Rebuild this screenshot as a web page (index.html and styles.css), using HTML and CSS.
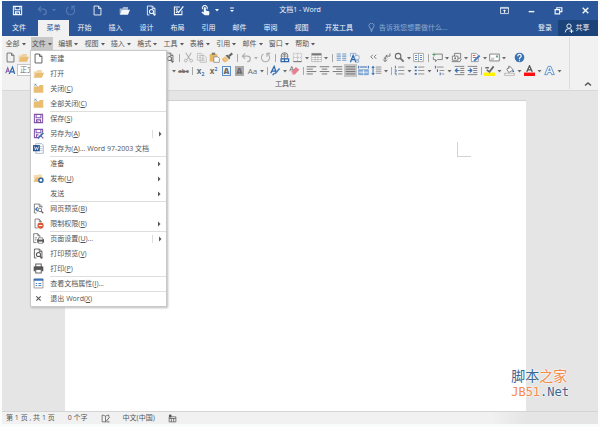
FILE: index.html
```html
<!DOCTYPE html>
<html lang="zh-CN">
<head>
<meta charset="utf-8">
<title>文档1 - Word</title>
<link rel="stylesheet" href="styles.css">
</head>
<body>
<svg class="sprite" aria-hidden="true">
  <symbol id="save" viewBox="0 0 16 16"><path d="M2 2h12v12H2z M4.500 2v5h7V2 M5 14v-4h6v4 M7 11.500v2" fill="none" stroke="currentColor" stroke-width="1.500"/></symbol>
  <symbol id="undo" viewBox="0 0 16 16"><path d="M6 2L2 6l4 4M2 6h7c6 0 6 8 0 8" fill="none" stroke="currentColor" stroke-width="1.800"/></symbol>
  <symbol id="redo" viewBox="0 0 16 16"><path d="M5 3a6 6 0 1 0 6 0M10 7V2h5" fill="none" stroke="currentColor" stroke-width="1.600"/></symbol>
  <symbol id="new" viewBox="0 0 16 16"><path d="M3 1.500h6.500L13 5v9.500H3z" class="paper" stroke="currentColor" stroke-width="1.300"/><path d="M9.500 1.500V5H13" fill="none" stroke="currentColor" stroke-width="1.300"/></symbol>
  <symbol id="open" viewBox="0 0 16 16"><path d="M1 13V5h4l1-2h7v4H4z" fill="currentColor" opacity=".6"/><path d="M4 7h12l-3 7H1z" fill="currentColor"/></symbol>
  <symbol id="shut" viewBox="0 0 16 16"><path d="M1 5h7l2-2h5v11H1z" fill="#e9bd72"/><path d="M2 1l4 4M5 1L2 4" stroke="#5d83b4" stroke-width="1.200"/></symbol>
  <symbol id="preview" viewBox="0 0 16 16"><path d="M5 14.500H2v-13h7.500L13 5v9.500h-2M9 1.500V5h4" fill="none" stroke="currentColor" stroke-width="1.300"/><circle cx="8" cy="9.500" r="3" fill="none" stroke="currentColor" stroke-width="1.500"/><path d="M10 12l3.500 3" stroke="currentColor" stroke-width="2"/></symbol>
  <symbol id="web" viewBox="0 0 16 16"><path d="M5 14.500H2v-13h7.500L13 5v2M9 1.500V5h4" fill="none" stroke="#777" stroke-width="1.300"/><path d="M7 6L4 9l3 3" fill="none" stroke="#3c78c0" stroke-width="2"/><circle cx="10" cy="10" r="2.600" fill="#fff" stroke="#666" stroke-width="1.300"/><path d="M12 12l3 3" stroke="#666" stroke-width="1.800"/></symbol>
  <symbol id="check" viewBox="0 0 16 16"><path d="M13 8v6H2V3h8M4 6h3M4 11h2" fill="none" stroke="currentColor" stroke-width="1.500"/><path d="M5 8l3 3 7-9" fill="none" stroke="currentColor" stroke-width="2"/></symbol>
  <symbol id="touch" viewBox="0 0 16 16"><path d="M4 6a3.500 3.500 0 1 1 6 0" fill="none" stroke="currentColor" stroke-width="1.500"/><path d="M5.500 4q1.500-2 3 0v4l4.500 1q1.500 1 0 6H7L2 11l1.500-1.500 2 1.500z" fill="currentColor"/></symbol>
  <symbol id="caret" viewBox="0 0 6 6"><path d="M1 2h4L3 4.500z" fill="currentColor"/></symbol>
  <symbol id="more" viewBox="0 0 8 8"><path d="M2 2h4" stroke="currentColor"/><path d="M2 4h4L4 6z" fill="currentColor"/></symbol>
  <symbol id="ropt" viewBox="0 0 16 16"><path d="M1 2.500h14v11H1zM1 4h14" fill="none" stroke="currentColor" stroke-width="1.400"/><path d="M8 6l3 3H9v3H7V9H5z" fill="currentColor"/></symbol>
  <symbol id="min" viewBox="0 0 16 16"><path d="M3 10h10" stroke="currentColor" stroke-width="2.500"/></symbol>
  <symbol id="restore" viewBox="0 0 16 16"><path d="M2 6.500h8V14H2zM5 6V3h9v7h-3" fill="none" stroke="currentColor" stroke-width="2"/></symbol>
  <symbol id="close" viewBox="0 0 16 16"><path d="M3 3l10 10M13 3L3 13" stroke="currentColor" stroke-width="2.500"/></symbol>
  <symbol id="bulb" viewBox="0 0 16 16"><path d="M6 11q0-2-1.500-3.500a4.500 4.500 0 1 1 7 0Q10 9 10 11zM6 13h4M7 15h2" fill="none" stroke="currentColor" stroke-width="1.200"/></symbol>
  <symbol id="person" viewBox="0 0 16 16"><circle cx="8" cy="5" r="3.500" fill="none" stroke="currentColor" stroke-width="1.500"/><path d="M2 15q0-6 6-6 2 0 3 1M9 13h6M12 10v6" fill="none" stroke="currentColor" stroke-width="1.500"/></symbol>
  <symbol id="cut" viewBox="0 0 16 16"><path d="M4 1l6 10M12 1L6 11" stroke="currentColor" stroke-width="1.500"/><circle cx="4" cy="12.500" r="2" fill="none" stroke="currentColor" stroke-width="1.300"/><circle cx="12" cy="12.500" r="2" fill="none" stroke="currentColor" stroke-width="1.300"/></symbol>
  <symbol id="copy" viewBox="0 0 16 16"><path d="M2 2h6l2 2v8H2zM6 5h6l3 3v7H6zM8 9h4M8 12h5M4 5h3M4 8h3" fill="none" stroke="currentColor"/></symbol>
  <symbol id="paste" viewBox="0 0 16 16"><path d="M1 3h11v11H1z" fill="#e8b765"/><path d="M4 1h5v3H4z" fill="#777"/><path d="M7 7h6l2 2v6H7z" fill="#fff" stroke="#777"/></symbol>
  <symbol id="brush" viewBox="0 0 16 16"><path d="M1 8l6 6-4 1-3-4z" fill="#e8b765"/><path d="M2 8l5 6 3-3-5-5z" fill="#edc27b"/><path d="M5 5l6 6 1-3-4-4z" fill="#666"/><path d="M10 6l5-4" stroke="#666" stroke-width="3"/></symbol>
  <symbol id="link" viewBox="0 0 16 16"><circle cx="8" cy="6" r="5" fill="none" stroke="#777" stroke-width="1.300"/><path d="M3 6h10M8 1v10M5 3q3 2 6 0" fill="none" stroke="#777"/><path d="M3 10h5v4H3zM8 10h6v4H8z" fill="#f1f1f1" stroke="#2c65ac" stroke-width="1.800"/></symbol>
  <symbol id="borders" viewBox="0 0 16 16"><path d="M2 2h12v12H2zM8 2v12M2 8h12" fill="none" stroke="#aaa" stroke-dasharray="2 1"/><path d="M2 14h12" stroke="#777" stroke-width="1.500"/></symbol>
  <symbol id="table" viewBox="0 0 16 16"><path d="M1 2h14v12H1zM1 8h14M1 11h14M6 3v11M10 3v11" fill="#fff" stroke="#aaa"/><path d="M1 2h14v3H1z" fill="#777"/></symbol>
  <symbol id="cols" viewBox="0 0 16 16"><path d="M1 3h6M1 6h6M1 9h6M1 12h6M9 3h6M9 6h6M9 9h6M9 12h6" stroke="#729bc9" stroke-width="1.500"/></symbol>
  <symbol id="art" viewBox="0 0 16 16"><path d="M2 7V2h8v4" fill="none" stroke="#729bc9"/><path d="M2 15L6 5l4 10M4 11h4" fill="none" stroke="#2c65ac" stroke-width="1.800"/><circle cx="11.500" cy="8" r="3.500" fill="none" stroke="#729bc9"/><path d="M9 12h5v3h-4" fill="none" stroke="#729bc9"/></symbol>
  <symbol id="quote" viewBox="0 0 16 16"><path d="M7 4L4 7l3 3M12 4L9 7l3 3" fill="none" stroke="currentColor" stroke-width="1.300"/></symbol>
  <symbol id="mark" viewBox="0 0 16 16"><path d="M13 2v4H7M9 4L7 6l2 2M8 9H4M6 7v7M3 11l3 3 3-3" fill="none" stroke="currentColor" stroke-width="1.300"/></symbol>
  <symbol id="find" viewBox="0 0 16 16"><circle cx="6" cy="6" r="4" fill="none" stroke="currentColor" stroke-width="1.700"/><path d="M9 9l5 5" stroke="currentColor" stroke-width="2.500"/></symbol>
  <symbol id="book" viewBox="0 0 16 16"><path d="M1 2h14v12H1zM8 2v12" fill="#fff" stroke="#888"/><path d="M3 5h3M3 8h3M3 11h3M10 5h3M10 8h3M10 11h3" stroke="#5a8fc8" stroke-width="1.500"/></symbol>
  <symbol id="comment" viewBox="0 0 16 16"><path d="M5 3h10v8H8l-3 3v-3H2V7" fill="none" stroke="#777" stroke-width="1.300"/><path d="M3 1v5M.5 3.500h5" stroke="#55a06c" stroke-width="1.500"/></symbol>
  <symbol id="layers" viewBox="0 0 16 16"><path d="M5 2h9v7H5z" fill="none" stroke="#777" stroke-width="1.300"/><path d="M2 6h8v6H2z" fill="#fff" stroke="#777" stroke-width="1.300"/><path d="M1 14h12l2-4" fill="none" stroke="#777" stroke-width="1.300"/><circle cx="6" cy="9" r="1.500" fill="#777"/></symbol>
  <symbol id="revise" viewBox="0 0 16 16"><path d="M2 2h7l3 3v9H2z" fill="#fff" stroke="#777"/><path d="M4 5h4M4 8h5" stroke="#d6694b" stroke-width="1.500"/><path d="M6 13l8-8" stroke="#4b82c4" stroke-width="3"/></symbol>
  <symbol id="mail" viewBox="0 0 16 16"><path d="M1 3h14v10H1z" fill="#fff" stroke="#777" stroke-width="1.300"/><path d="M3 9h5M3 11h4" stroke="#999"/><path d="M10 5h3v3h-3z" fill="#6aa580"/></symbol>
  <symbol id="help" viewBox="0 0 16 16"><circle cx="8" cy="8" r="7" fill="#3b72b5"/><path d="M5.500 6q0-2.500 2.500-2.500T10.500 6Q10.500 7 8 9v1.500M8 12v1.500" fill="none" stroke="#fff" stroke-width="1.700"/></symbol>
  <symbol id="styles" viewBox="0 0 16 16"><path d="M1 12L4 4l2 6M2 9h3" fill="none" stroke="#8a5da5" stroke-width="1.500"/><path d="M6 13l5-10 3 10M8 10h5" fill="none" stroke="#2c65ac" stroke-width="1.800"/></symbol>
  <symbol id="pen" viewBox="0 0 16 16"><path d="M1 12L6 2l3 9M3 9h5" fill="none" stroke="#2c65ac" stroke-width="1.800"/><path d="M4 15q1-3 4-3l6-7" fill="none" stroke="#4b82c4" stroke-width="2.500"/></symbol>
  <symbol id="eraser" viewBox="0 0 16 16"><path d="M1 9L4 2l3 7M2 7h4" fill="none" stroke="#777" stroke-width="1.300"/><path d="M3 10l7-7 5 4-7 7H5z" fill="#e37f8f"/><path d="M3 10l4 4" stroke="#fff"/></symbol>
  <symbol id="left" viewBox="0 0 16 16"><path d="M1 2.500h14M1 6h9M1 9.500h14M1 13h9" stroke="currentColor" stroke-width="1.300"/></symbol>
  <symbol id="center" viewBox="0 0 16 16"><path d="M1 2.500h14M4 6h8M1 9.500h14M4 13h8" stroke="currentColor" stroke-width="1.300"/></symbol>
  <symbol id="right" viewBox="0 0 16 16"><path d="M1 2.500h14M6 6h9M1 9.500h14M6 13h9" stroke="currentColor" stroke-width="1.300"/></symbol>
  <symbol id="justify" viewBox="0 0 16 16"><path d="M1 2.500h14M1 6h14M1 9.500h14M1 13h14" stroke="currentColor" stroke-width="1.300"/></symbol>
  <symbol id="spread" viewBox="0 0 16 16"><path d="M1 1v4M15 1v4M3 3h10" stroke="#2c65ac" stroke-width="1.500"/><path d="M1 7h14v7H1z" fill="#8fb2da" stroke="#5a8fc8"/><path d="M1 10.500h14M8 7v7" stroke="#fff"/></symbol>
  <symbol id="lines" viewBox="0 0 16 16"><path d="M3 2v12M1 4l2-2 2 2M1 12l2 2 2-2" fill="none" stroke="#3b72b5" stroke-width="1.500"/><path d="M7 3h8M7 6h8M7 9h8M7 12h8" stroke="#888" stroke-width="1.300"/></symbol>
  <symbol id="numbers" viewBox="0 0 16 16"><path d="M2 1v4M1 7h2v3H1M1 12h2v3" fill="none" stroke="#3b72b5" stroke-width="1.300"/><path d="M6 3h9M6 8h9M6 13h9" stroke="#888" stroke-width="1.300"/></symbol>
  <symbol id="bullets" viewBox="0 0 16 16"><path d="M1 3h3M1 8h3M1 13h3" stroke="#3b72b5" stroke-width="2.500"/><path d="M6 3h9M6 8h9M6 13h9" stroke="#888" stroke-width="1.300"/></symbol>
  <symbol id="levels" viewBox="0 0 16 16"><path d="M2 1v4M5 6v4M9 11v4" stroke="#3b72b5" stroke-width="1.500"/><path d="M4 3h10M8 8h7M11 13h4" stroke="#888" stroke-width="1.300"/></symbol>
  <symbol id="outdent" viewBox="0 0 16 16"><path d="M1 2h14M9 5h6M9 8h6M9 11h6M1 14h14" stroke="#777" stroke-width="1.300"/><path d="M8 8H2M5 5L2 8l3 3" fill="none" stroke="#3b72b5" stroke-width="1.800"/></symbol>
  <symbol id="indent" viewBox="0 0 16 16"><path d="M1 2h14M9 5h6M9 8h6M9 11h6M1 14h14" stroke="#777" stroke-width="1.300"/><path d="M1 8h6M4 5l3 3-3 3" fill="none" stroke="#3b72b5" stroke-width="1.800"/></symbol>
  <symbol id="marker" viewBox="0 0 16 16"><path d="M0 11h16v5H0z" fill="#fff200"/><path d="M2 4h5M4 7l4 3 6-8" fill="none" stroke="#666" stroke-width="2.500"/></symbol>
  <symbol id="fill" viewBox="0 0 16 16"><path d="M4 6l5-4 4 5-6 4zM7 1v5" fill="#fff" stroke="#777" stroke-width="1.300"/><path d="M13 6l2 4h-3z" fill="#3b72b5"/><path d="M1 12h14v3H1z" fill="#fff" stroke="#999"/></symbol>
  <symbol id="color" viewBox="0 0 16 16"><path d="M4 10L8 1l4 9M5.500 7h5" fill="none" stroke="#555" stroke-width="1.800"/><path d="M0 11h16v5H0z" fill="#fb1010"/></symbol>
  <symbol id="effect" viewBox="0 0 16 16"><path d="M1 14L6 2h4l5 12h-4l-1-3H6l-1 3zM7 8h2L8 5z" fill="#eaf2fb" stroke="#5a8fc8" stroke-width="1.300"/></symbol>
  <symbol id="up" viewBox="0 0 8 8"><path d="M1 5.500L4 3l3 2.500" fill="none" stroke="currentColor" stroke-width="1.500"/></symbol>
  <symbol id="saveas" viewBox="0 0 16 16"><path d="M8 14H2V2h12v5M4.500 2v5h7V2M5 14v-4h3" fill="none" stroke="#8152a8" stroke-width="1.500"/><path d="M7 15l8-8" stroke="#3b72b5" stroke-width="2.500"/><path d="M11 11l4 4" stroke="#8152a8" stroke-width="1.500"/></symbol>
  <symbol id="word" viewBox="0 0 16 16"><path d="M6 1h7l2 2v12H4V1z" fill="#fff" stroke="#8c9cae"/><path d="M10 5h4M10 8h4M10 11h4" stroke="#9ab0cc"/><path d="M0 3h10v9H0z" fill="#2b579a"/><path d="M2 5l1.500 5L5 6l1.500 4L8 5" fill="none" stroke="#fff"/></symbol>
  <symbol id="publish" viewBox="0 0 16 16"><path d="M1 13V3h5l1-1h6v4H4z" fill="#f5dcae"/><path d="M4 6h11l-3 7H1z" fill="#e9bd72"/><circle cx="11.500" cy="10.500" r="3" fill="#fff" stroke="#3467a8" stroke-width="2.200"/></symbol>
  <symbol id="limit" viewBox="0 0 16 16"><path d="M7 14.500H3v-13h6L12 5v1M9 1.500V5h3" fill="none" stroke="#777" stroke-width="1.300"/><circle cx="11" cy="11" r="4.500" fill="#d9532f"/><path d="M8.500 11h5" stroke="#fff" stroke-width="1.800"/></symbol>
  <symbol id="setup" viewBox="0 0 16 16"><path d="M5 14H1V1h6l3 3v3M7 1v3h3M3 7h3M3 10h2" fill="none" stroke="#777" stroke-width="1.300"/><path d="M6 9h10v5H6z" fill="#555"/><path d="M8 7h6v3H8zM8 12h6v3H8z" fill="#fff" stroke="#666"/></symbol>
  <symbol id="print" viewBox="0 0 16 16"><path d="M4 1.500h8V6H4z" fill="#fff" stroke="#666" stroke-width="1.500"/><path d="M1 5h14v7H1z" fill="#555"/><path d="M4 9.500h8v5H4z" fill="#fff" stroke="#666" stroke-width="1.500"/></symbol>
  <symbol id="props" viewBox="0 0 16 16"><path d="M1.500 1.500h13v13h-13z" fill="#fff" stroke="#777"/><path d="M1 1h14v3H1z" fill="#3b72b5"/><path d="M4 8h2M8 8h4M4 11h2M8 11h4" stroke="#4b82c4" stroke-width="1.500"/></symbol>
  <symbol id="arrow" viewBox="0 0 6 6"><path d="M2 .5L4.500 3 2 5.500z" fill="currentColor"/></symbol>
  <symbol id="proof" viewBox="0 0 16 16"><path d="M9 14H2V2q4 0 6 2 2-2 6-2v4M8 4v10" fill="none" stroke="currentColor" stroke-width="1.300"/><path d="M9 13l6-7M10 14h5" stroke="currentColor" stroke-width="1.600"/></symbol>
  <symbol id="macro" viewBox="0 0 16 16"><path d="M2 5h12v9H2zM2 8h12M6 8v6M10 8v6" fill="none" stroke="currentColor" stroke-width="1.300"/><circle cx="4" cy="3.500" r="2.500" fill="currentColor"/></symbol>
</svg>

<div class="window">
  <header class="titlebar">
    <div class="quick">
      <button aria-label="保存"><svg><use href="#save"/></svg></button>
      <span class="pair dim"><button aria-label="撤消"><svg><use href="#undo"/></svg></button><svg class="caret"><use href="#caret"/></svg></span>
      <button class="dim" aria-label="恢复"><svg><use href="#redo"/></svg></button>
      <button aria-label="新建"><svg><use href="#new"/></svg></button>
      <button aria-label="打开"><svg><use href="#open"/></svg></button>
      <button aria-label="打印预览"><svg><use href="#preview"/></svg></button>
      <button aria-label="编辑"><svg><use href="#check"/></svg></button>
      <span class="pair"><button aria-label="触摸模式"><svg><use href="#touch"/></svg></button><svg class="caret"><use href="#caret"/></svg></span>
      <button aria-label="自定义"><svg class="small"><use href="#more"/></svg></button>
    </div>
    <h1>文档1 - Word</h1>
    <div class="controls">
      <button aria-label="功能区选项"><svg><use href="#ropt"/></svg></button>
      <button aria-label="最小化"><svg><use href="#min"/></svg></button>
      <button aria-label="还原"><svg><use href="#restore"/></svg></button>
      <button aria-label="关闭"><svg><use href="#close"/></svg></button>
    </div>
  </header>

  <nav class="tabs">
    <button class="file">文件</button>
    <button class="active">菜单</button>
    <button>开始</button>
    <button>插入</button>
    <button>设计</button>
    <button>布局</button>
    <button>引用</button>
    <button>邮件</button>
    <button>审阅</button>
    <button>视图</button>
    <button class="wide">开发工具</button>
    <label class="tell"><svg><use href="#bulb"/></svg><input type="text" placeholder="告诉我您想要做什么..."></label>
    <button class="login">登录</button>
    <button class="share"><svg><use href="#person"/></svg>共享</button>
  </nav>

  <section class="ribbon">
    <div class="group">
      <div class="menubar">
        <button>全部<svg class="caret"><use href="#caret"/></svg></button>
        <div class="host">
          <button class="on">文件<svg class="caret"><use href="#caret"/></svg></button>
          <ul class="menu">
            <li><button><svg><use href="#new"/></svg><span>新建</span></button></li>
            <li><button><svg class="gold"><use href="#open"/></svg><span>打开</span></button></li>
            <li><button><svg><use href="#shut"/></svg><span>关闭(<u>C</u>)</span></button></li>
            <li><button><svg><use href="#shut"/></svg><span>全部关闭(<u>C</u>)</span></button></li>
            <li class="rule"><button><svg class="purple"><use href="#save"/></svg><span>保存(<u>S</u>)</span></button></li>
            <li><button><svg><use href="#saveas"/></svg><span>另存为(<u>A</u>)</span><i class="sub split"><svg><use href="#arrow"/></svg></i></button></li>
            <li><button><svg><use href="#word"/></svg><span>另存为(<u>A</u>)... Word 97-2003 文档</span></button></li>
            <li class="rule"><button><svg></svg><span>准备</span><i class="sub"><svg><use href="#arrow"/></svg></i></button></li>
            <li><button><svg><use href="#publish"/></svg><span>发布(<u>U</u>)</span><i class="sub"><svg><use href="#arrow"/></svg></i></button></li>
            <li><button><svg></svg><span>发送</span><i class="sub"><svg><use href="#arrow"/></svg></i></button></li>
            <li class="rule"><button><svg><use href="#web"/></svg><span>网页预览(<u>B</u>)</span></button></li>
            <li><button><svg><use href="#limit"/></svg><span>限制权限(<u>R</u>)</span><i class="sub"><svg><use href="#arrow"/></svg></i></button></li>
            <li class="rule"><button><svg><use href="#setup"/></svg><span>页面设置(<u>U</u>)...</span><i class="sub split"><svg><use href="#arrow"/></svg></i></button></li>
            <li><button><svg><use href="#preview"/></svg><span>打印预览(<u>V</u>)</span></button></li>
            <li><button><svg><use href="#print"/></svg><span>打印(<u>P</u>)</span></button></li>
            <li class="rule"><button><svg><use href="#props"/></svg><span>查看文档属性(<u>I</u>)...</span></button></li>
            <li class="rule"><button><svg class="tiny"><use href="#close"/></svg><span>退出 Word(<u>X</u>)</span></button></li>
          </ul>
        </div>
        <button>编辑<svg class="caret"><use href="#caret"/></svg></button>
        <button>视图<svg class="caret"><use href="#caret"/></svg></button>
        <button>插入<svg class="caret"><use href="#caret"/></svg></button>
        <button>格式<svg class="caret"><use href="#caret"/></svg></button>
        <button>工具<svg class="caret"><use href="#caret"/></svg></button>
        <button>表格<svg class="caret"><use href="#caret"/></svg></button>
        <button>引用<svg class="caret"><use href="#caret"/></svg></button>
        <button>邮件<svg class="caret"><use href="#caret"/></svg></button>
        <button>窗口<svg class="caret"><use href="#caret"/></svg></button>
        <button>帮助<svg class="caret"><use href="#caret"/></svg></button>
      </div>

      <div class="tools">
        <div class="lead">
          <button aria-label="新建"><svg><use href="#new"/></svg></button>
          <button class="gold" aria-label="打开"><svg><use href="#open"/></svg></button>
        </div>
        <button aria-label="打印预览"><svg><use href="#preview"/></svg></button>
        <span class="sep"></span>
        <button class="faint" aria-label="剪切"><svg><use href="#cut"/></svg></button>
        <button class="faint" aria-label="复制"><svg><use href="#copy"/></svg></button>
        <button aria-label="粘贴"><svg><use href="#paste"/></svg></button>
        <button aria-label="格式刷"><svg><use href="#brush"/></svg></button>
        <span class="sep"></span>
        <button class="faint" aria-label="撤消"><svg><use href="#undo"/></svg></button><svg class="caret faint"><use href="#caret"/></svg>
        <button class="faint" aria-label="恢复"><svg><use href="#redo"/></svg></button>
        <span class="sep"></span>
        <button aria-label="超链接"><svg><use href="#link"/></svg></button>
        <button aria-label="边框"><svg><use href="#borders"/></svg></button><svg class="caret"><use href="#caret"/></svg>
        <button aria-label="表格"><svg><use href="#table"/></svg></button><svg class="caret"><use href="#caret"/></svg>
        <span class="sep"></span>
        <button aria-label="分栏"><svg><use href="#cols"/></svg></button>
        <button aria-label="绘图"><svg><use href="#art"/></svg></button>
        <span class="sep blank"></span>
        <button aria-label="引号"><svg><use href="#quote"/></svg></button>
        <button aria-label="编辑标记"><svg><use href="#mark"/></svg></button>
        <button aria-label="查找"><svg><use href="#find"/></svg></button><svg class="caret"><use href="#caret"/></svg>
        <button aria-label="阅读"><svg><use href="#book"/></svg></button>
        <span class="sep"></span>
        <button aria-label="批注"><svg><use href="#comment"/></svg></button><svg class="caret"><use href="#caret"/></svg>
        <button aria-label="窗口"><svg><use href="#layers"/></svg></button><svg class="caret"><use href="#caret"/></svg>
        <button aria-label="修订"><svg><use href="#revise"/></svg></button><svg class="caret"><use href="#caret"/></svg>
        <button aria-label="信封"><svg><use href="#mail"/></svg></button><svg class="caret"><use href="#caret"/></svg>
        <span class="sep blank"></span>
        <button aria-label="帮助"><svg><use href="#help"/></svg></button>
      </div>

      <div class="tools second">
        <div class="lead">
          <button aria-label="样式"><svg><use href="#styles"/></svg></button>
          <select aria-label="样式"><option>正文</option></select>
        </div>
        <svg class="caret"><use href="#caret"/></svg>
        <button class="glyph" aria-label="删除线"><s>abc</s></button>
        <span class="sep"></span>
        <button class="glyph" aria-label="下标">x<sub>2</sub></button>
        <button class="glyph" aria-label="上标">x<sup>2</sup></button>
        <button class="glyph" aria-label="字符边框"><b class="boxed">A</b></button>
        <button class="glyph" aria-label="字符底纹"><b class="shaded">A</b></button>
        <button class="glyph plain" aria-label="更改大小写">Aa</button><svg class="caret"><use href="#caret"/></svg>
        <span class="sep"></span>
        <button aria-label="样式刷"><svg><use href="#pen"/></svg></button><svg class="caret"><use href="#caret"/></svg>
        <button aria-label="清除格式"><svg><use href="#eraser"/></svg></button>
        <span class="sep"></span>
        <button aria-label="左对齐"><svg><use href="#left"/></svg></button>
        <button aria-label="居中"><svg><use href="#center"/></svg></button>
        <button aria-label="右对齐"><svg><use href="#right"/></svg></button>
        <button class="pressed" aria-label="两端对齐"><svg><use href="#justify"/></svg></button>
        <button aria-label="分散对齐"><svg><use href="#spread"/></svg></button>
        <button aria-label="行距"><svg><use href="#lines"/></svg></button><svg class="caret"><use href="#caret"/></svg>
        <span class="sep"></span>
        <button aria-label="编号"><svg><use href="#numbers"/></svg></button><svg class="caret roomy"><use href="#caret"/></svg>
        <button aria-label="项目符号"><svg><use href="#bullets"/></svg></button><svg class="caret roomy"><use href="#caret"/></svg>
        <button aria-label="多级列表"><svg><use href="#levels"/></svg></button><svg class="caret roomy"><use href="#caret"/></svg>
        <button aria-label="减少缩进"><svg><use href="#outdent"/></svg></button>
        <button aria-label="增加缩进"><svg><use href="#indent"/></svg></button>
        <span class="sep"></span>
        <button aria-label="突出显示"><svg><use href="#marker"/></svg></button><svg class="caret roomy"><use href="#caret"/></svg>
        <button aria-label="底纹"><svg><use href="#fill"/></svg></button><svg class="caret roomy"><use href="#caret"/></svg>
        <button aria-label="字体颜色"><svg><use href="#color"/></svg></button><svg class="caret roomy"><use href="#caret"/></svg>
        <button aria-label="文本效果"><svg><use href="#effect"/></svg></button><svg class="caret roomy"><use href="#caret"/></svg>
      </div>
      <p class="caption">工具栏</p>
    </div>
    <button class="collapse" aria-label="折叠功能区"><svg class="small"><use href="#up"/></svg></button>
  </section>

  <main class="workspace">
    <article class="page"><span class="corner"></span></article>
    <div class="watermark"><p>脚本<em>之家</em></p><p class="site"><em>JB51</em>.Net</p></div>
  </main>

  <footer class="status">
    <span>第 1 页 , 共 1 页</span>
    <span>0 个字</span>
    <svg><use href="#proof"/></svg>
    <span>中文(中国)</span>
    <svg><use href="#macro"/></svg>
  </footer>
</div>
</body>
</html>
```
FILE: styles.css
```css
* { box-sizing: border-box; }

body {
  margin: 0;
  background: #fbfcfc;
  color: #555;
  font: 7px/10px "Open Sans", "Noto Sans CJK SC", sans-serif;
}

button, input, select {
  margin: 0;
  padding: 0;
  border: 0;
  background: none;
  color: inherit;
  font: inherit;
}

button {
  display: flex;
  align-items: center;
  justify-content: center;
  white-space: nowrap;
}

p, h1, ul { margin: 0; padding: 0; }
em, i { font-style: normal; }
svg { display: block; flex: none; width: 11px; height: 11px; }
.sprite { position: absolute; width: 0; height: 0; }
.paper { fill: none; }
.caret { width: 6px; height: 6px; }
.small { width: 8px; height: 8px; }

.window {
  display: flex;
  flex-direction: column;
  min-height: 100vh;
  padding: 1px 2px 3px;
}

/* Title bar */
.titlebar {
  display: grid;
  grid-template-columns: 1fr auto 1fr;
  align-items: center;
  height: 18px;
  background: #2b579a;
  color: #f4f7fb;
}

.titlebar h1 { font-size: 7px; font-weight: 400; }
.quick { display: flex; align-items: center; gap: 16px; padding-left: 10px; }
.quick .pair { display: flex; align-items: center; gap: 3px; margin-right: -8px; }
.quick .pair:first-of-type { margin-left: -2px; }
.dim { color: #5478b0; }
.controls { display: flex; justify-content: flex-end; gap: 16px; padding-right: 7px; }
.controls svg { width: 11px; height: 9px; }

/* Tabs */
.tabs {
  display: flex;
  height: 17px;
  background: #2b579a;
  color: #f0f4fa;
}

.tabs > button { width: 31px; height: 16px; margin-top: 1px; }
.tabs .file { width: 36px; padding-right: 2px; }
.tabs .active { background: #f1f1f1; color: #2b579a; }
.tabs .wide { width: 44px; }
.tell { display: flex; align-items: center; gap: 3px; flex: 1; padding-left: 6px; color: #a5b9d8; }
.tell svg { width: 9px; height: 9px; }
.tell input { width: 90px; }
.tell input::placeholder { color: #92a9ce; opacity: 1; }
.tabs .login { width: 26px; }
.tabs .share { width: 40px; gap: 2px; padding-right: 3px; background: #1b4379; }
.tabs .share svg { width: 10px; height: 10px; }

/* Ribbon */
.ribbon {
  display: grid;
  grid-template-columns: 1fr 28px;
  padding: 1px 0;
  border-bottom: 1px solid #d8d8d8;
  background: #f1f1f1;
}

.group { min-width: 0; border-right: 1px solid #dcdcdc; }
.menubar { display: grid; grid-template-columns: repeat(12, 1fr); width: 316px; margin-left: 3px; }
.menubar > button, .on { width: 22px; height: 13px; gap: 1px; }
.on { background: #c8c8c8; }
.host { position: relative; }

.tools { display: flex; align-items: center; height: 13px; padding-left: 2px; color: #6c6c6c; }
.menubar + .tools { margin-top: 1px; }
.tools button { width: 13px; height: 13px; }
.tools > * { flex: none; }
.tools .lead { display: flex; width: 159px; }
.sep { width: 6px; height: 8px; background: linear-gradient(#a8a8a8, #a8a8a8) center / 1px 100% no-repeat; }
.sep.blank { background: none; }
.second .lead { width: 167px; }
.second .sep { width: 4px; }
.second .roomy { width: 7px; }
.tools select {
  width: 60px;
  height: 12px;
  padding-left: 2px;
  border: 1px solid #c6c6c6;
  background: #fff;
  appearance: none;
}

.glyph { font-size: 8px; font-weight: 700; }
.glyph s { font-size: 6px; }
.glyph sub, .glyph sup { color: #3b72b5; font-size: 5px; line-height: 6px; }
.glyph sub { align-self: flex-end; }
.glyph sup { align-self: flex-start; margin-top: 2px; }
.plain { font-weight: 400; }
.boxed, .shaded { width: 9px; border: 1px solid #5a8fc8; line-height: 8px; }
.shaded { border-color: #aaa; background: #aaa; }
.tools .pressed { background: #c6c6c6; }
.tools .gold, .gold { color: #e9bd72; }
.purple { color: #8152a8; }
.tools .faint { color: #b0b0b0; }
.caption { padding-top: 2px; text-align: center; line-height: 10px; }
.collapse { align-self: end; width: 20px; height: 10px; margin-left: 8px; }

/* Drop-down menu */
.menu {
  position: absolute;
  z-index: 2;
  top: 13px;
  left: -1px;
  width: 137px;
  border: 1px solid #c9c9c9;
  background: #fff;
  box-shadow: 1px 1px 2px #bbb;
  list-style: none;
}

.menu button { width: 100%; height: 15px; justify-content: flex-start; gap: 6px; padding-left: 2px; text-align: left; }
.menu span { flex: 1; }
.menu .rule { background: linear-gradient(#dedede, #dedede) 19px 0 / 100% 1px no-repeat; }
.menu .tiny { height: 7px; }
.sub { display: flex; align-items: center; justify-content: center; width: 14px; height: 8px; }
.sub svg { width: 6px; height: 6px; }
.split { border-left: 1px solid #ddd; }
u { text-underline-offset: 1px; text-decoration-thickness: 1px; }

/* Document */
.workspace {
  position: relative;
  display: flex;
  flex: 1;
  padding: 9px 72px 0 63px;
  background: #e5e5e5;
}

.page { flex: 1; border-top: 1px solid #d0d0d0; background: #fff; }
.corner {
  display: block;
  width: 14px;
  height: 15px;
  margin: 41px 55px 0 auto;
  border: solid #d2d2d2;
  border-width: 0 0 1px 1px;
}

.watermark {
  position: absolute;
  right: 29px;
  bottom: 11px;
  color: #3d6591;
  font: 14px/16px "DejaVu Sans Mono", "Noto Sans CJK SC", monospace;
  text-shadow: 0 0 2px #fff, 0 0 2px #fff;
}

.watermark em { color: #f58a4b; }
.watermark .site { font-size: 12px; }

/* Status bar */
.status {
  display: flex;
  align-items: center;
  gap: 13px;
  height: 13px;
  padding-left: 4px;
  border-top: 1px solid #d4d4d4;
  background: linear-gradient(90deg, #f1f1f1 82%, #e5e5e5 88%);
}

.status svg { width: 9px; height: 9px; }
```
